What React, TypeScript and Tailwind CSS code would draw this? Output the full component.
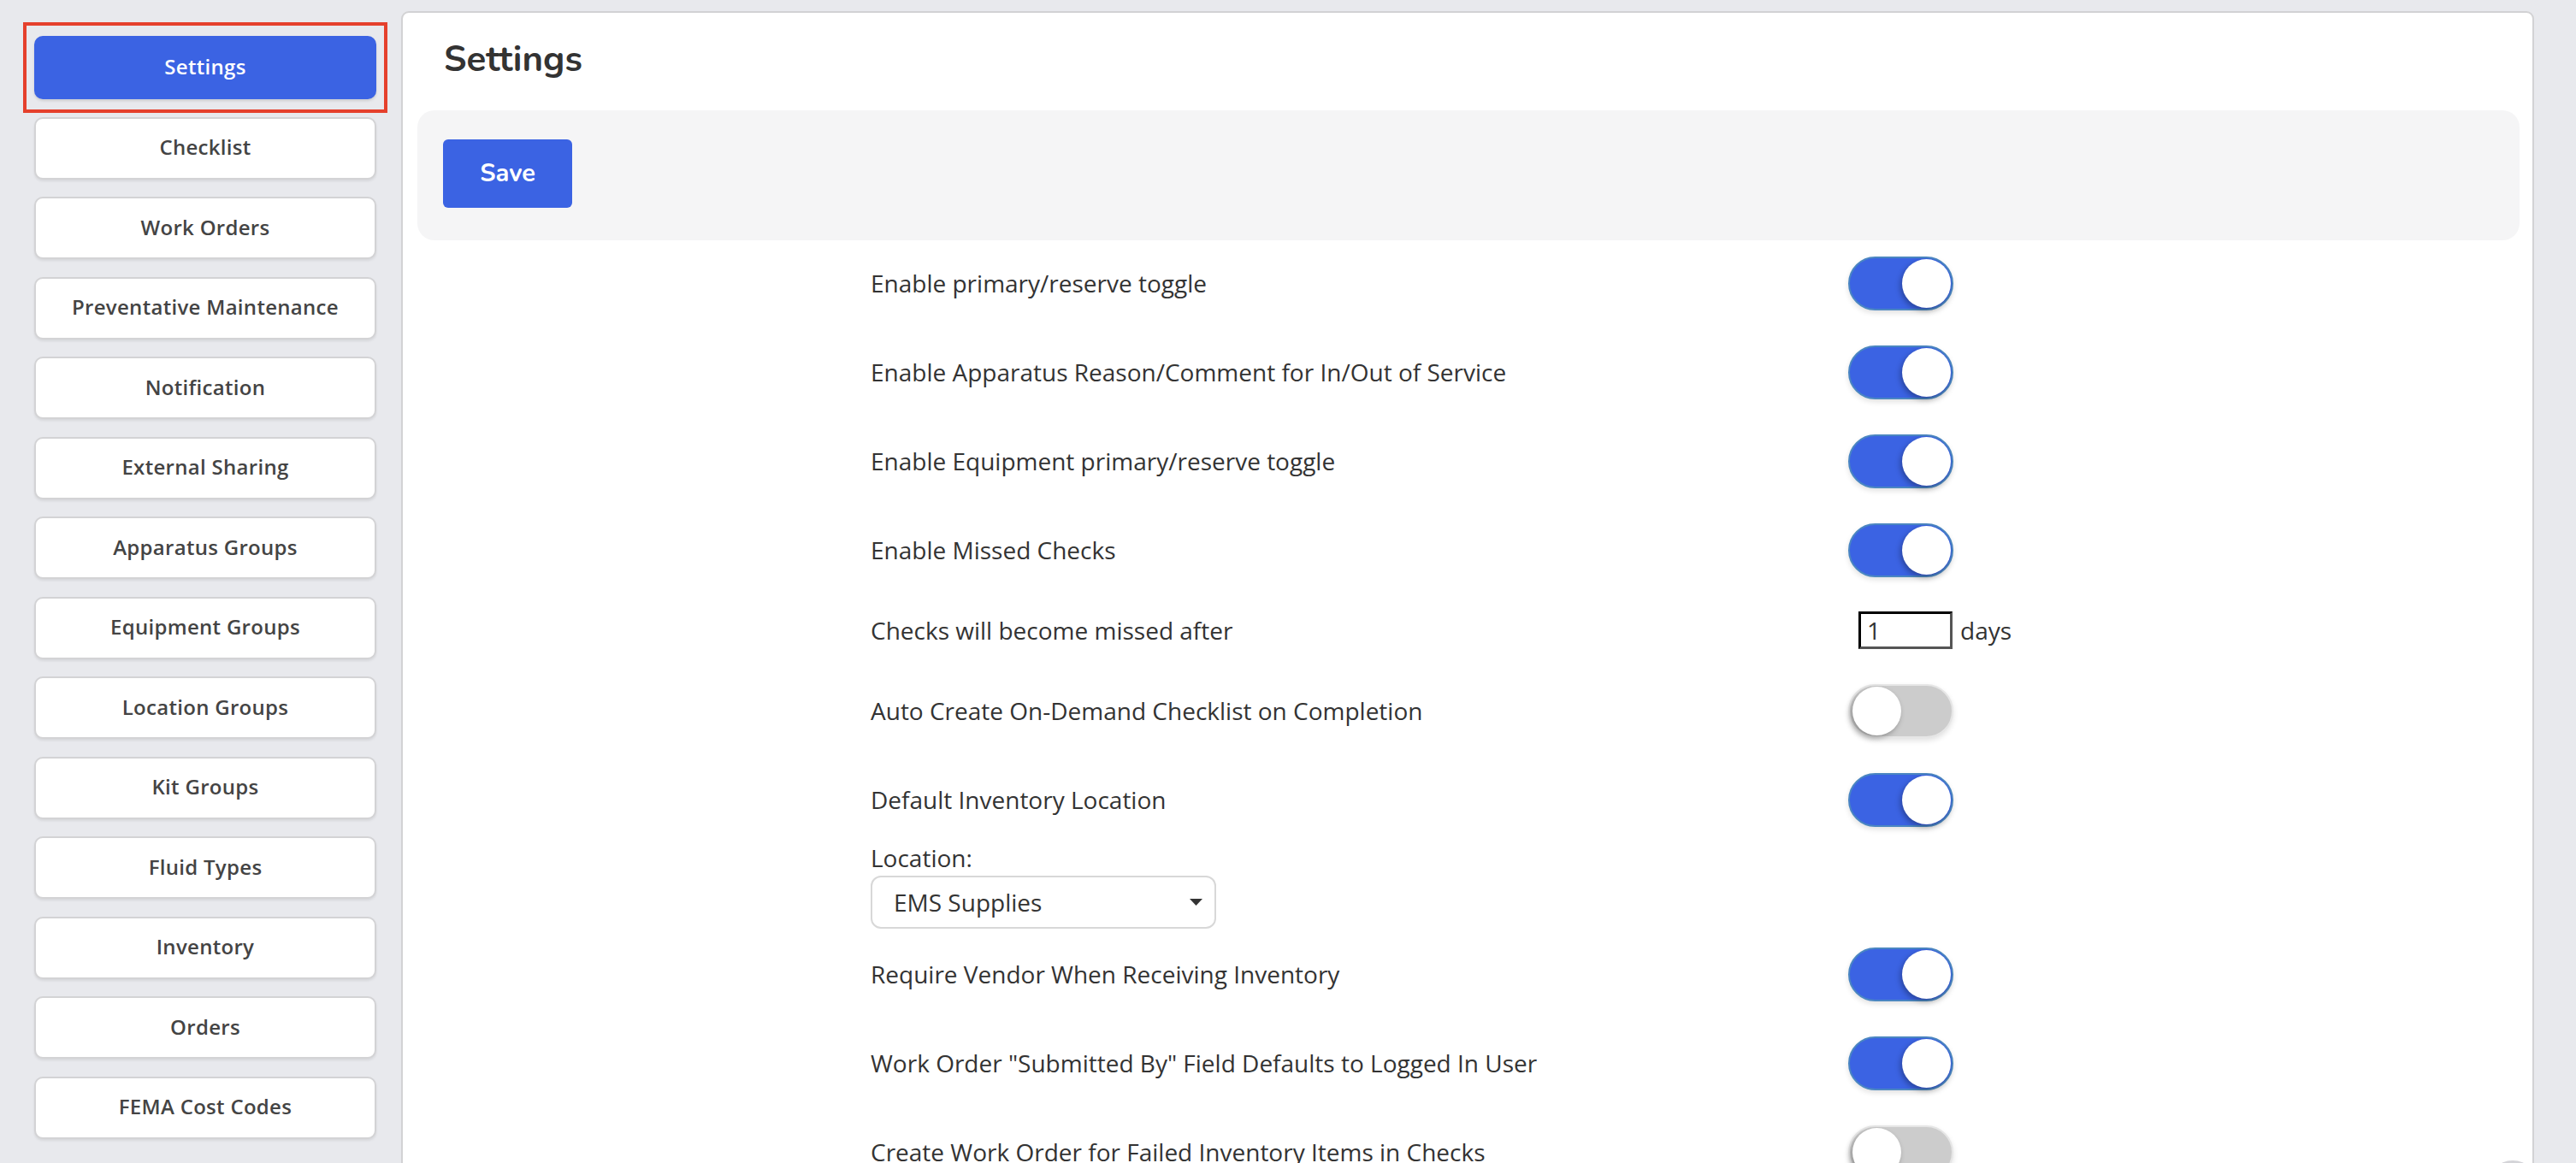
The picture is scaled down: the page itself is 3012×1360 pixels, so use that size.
import React from 'react';

const NAV = [
  'Settings',
  'Checklist',
  'Work Orders',
  'Preventative Maintenance',
  'Notification',
  'External Sharing',
  'Apparatus Groups',
  'Equipment Groups',
  'Location Groups',
  'Kit Groups',
  'Fluid Types',
  'Inventory',
  'Orders',
  'FEMA Cost Codes',
];

type Row =
  | { kind: 'toggle'; label: string; on: boolean }
  | { kind: 'days'; label: string }
  | { kind: 'location' };

const ROWS: Row[] = [
  { kind: 'toggle', label: 'Enable primary/reserve toggle', on: true },
  { kind: 'toggle', label: 'Enable Apparatus Reason/Comment for In/Out of Service', on: true },
  { kind: 'toggle', label: 'Enable Equipment primary/reserve toggle', on: true },
  { kind: 'toggle', label: 'Enable Missed Checks', on: true },
  { kind: 'days', label: 'Checks will become missed after' },
  { kind: 'toggle', label: 'Auto Create On-Demand Checklist on Completion', on: false },
  { kind: 'toggle', label: 'Default Inventory Location', on: true },
  { kind: 'location' },
  { kind: 'toggle', label: 'Require Vendor When Receiving Inventory', on: true },
  { kind: 'toggle', label: 'Work Order "Submitted By" Field Defaults to Logged In User', on: true },
  { kind: 'toggle', label: 'Create Work Order for Failed Inventory Items in Checks', on: false },
];

function Toggle({ on }: { on: boolean }) {
  return (
    <div
      className={`flex h-[63px] w-[123px] items-center rounded-full border-2 px-[1px] shadow-[0_3px_6px_rgba(0,0,0,0.12)] ${
        on ? 'justify-end border-[#4a86c2] bg-[#3b63e3]' : 'justify-start border-[#e6e6e6] bg-[#cccccc] pl-[3px]'
      }`}>
      <div className="h-[57px] w-[57px] rounded-full bg-white shadow-[-2px_3px_6px_rgba(0,0,0,0.3)]" />
    </div>
  );
}

export default function App() {
  return (
    <div
      className="flex h-[1360px] w-[3012px] overflow-hidden bg-[#e8e9ed] text-[#333]"
      style={{ fontFamily: '"Open Sans", "Noto Sans", sans-serif' }}>
      {/* Left nav */}
      <div className="w-[469px] shrink-0 pl-[40px] pt-[42px]">
        <div className="flex w-[400px] flex-col gap-[20.5px]">
          {NAV.map((name, i) =>
            i === 0 ? (
              <div key={name} className="relative">
                <div className="flex h-[74px] items-center justify-center rounded-[10px] bg-[#3b63e3] pb-[2px] text-[24px] font-semibold tracking-[0.3px] text-white shadow-[0_2px_3px_rgba(0,0,0,0.12)]">
                  {name}
                </div>
                <div className="absolute -top-[16px] -right-[13px] -bottom-[16px] -left-[13px] border-[4px] border-[#e5402c]" />
              </div>
            ) : (
              <div
                key={name}
                className="flex h-[73px] items-center justify-center rounded-[10px] border-2 border-[#d3d3d5] bg-white pb-[2px] text-[24px] font-semibold tracking-[0.3px] text-[#444] shadow-[0_2px_3px_rgba(0,0,0,0.08)]">
                {name}
              </div>
            )
          )}
        </div>
      </div>

      {/* Main card */}
      <div className="flex-1 pr-[49px] pt-[13px]">
        <div className="h-[1420px] rounded-[9px] border-2 border-[#d2d2d4] bg-white">
          <div className="h-[114px] pl-[48px] pt-[30px]">
            <h1
              className="text-[42px] font-bold leading-[50px] text-[#333]"
              style={{ fontFamily: '"Nunito", "Lato", sans-serif' }}>
              Settings
            </h1>
          </div>

          <div className="ml-[17px] mr-[15px] h-[152px] rounded-[20px] bg-[#f5f5f6] pl-[30px] pt-[34px]">
            <button
              type="button"
              className="flex h-[80px] w-[151px] items-center justify-center rounded-[6px] bg-[#3b63e3] text-[29px] font-bold text-white"
              style={{ fontFamily: '"Nunito", "Lato", sans-serif' }}>
              Save
            </button>
          </div>

          <div className="-mt-[2px] ml-[547px] text-[28px]">
            {ROWS.map((row, i) => {
              if (row.kind === 'location') {
                return (
                  <div key={i} className="pb-[1px]">
                    <div className="leading-[32px]">Location:</div>
                    <div className="mt-[5px] flex h-[62px] w-[404px] items-center justify-between rounded-[12px] border-2 border-[#d8d8d8] pl-[25px] pr-[14px]">
                      <span>EMS Supplies</span>
                      <svg width="15" height="8" viewBox="0 0 15 8">
                        <path d="M0 0h15L7.5 8z" fill="#333" />
                      </svg>
                    </div>
                  </div>
                );
              }
              if (row.kind === 'days') {
                return (
                  <div key={i} className="flex h-[84px] items-center">
                    <div className="w-[1143px]">{row.label}</div>
                    <div className="ml-[12px] flex h-[44px] w-[110px] items-center border-[3px] border-t-black border-r-[#555] border-b-[#555] border-l-black pl-[7px]">
                      1
                    </div>
                    <span className="ml-[9px]">days</span>
                  </div>
                );
              }
              return (
                <div key={i} className="flex h-[104px] items-center">
                  <div className="w-[1143px]">{row.label}</div>
                  <Toggle on={row.on} />
                </div>
              );
            })}
          </div>
        </div>
      </div>

      {/* Floating help button peeking at the bottom edge */}
      <div className="absolute left-[2908px] top-[1357px] h-[60px] w-[60px] rounded-full bg-[#d4d4d8]" />
    </div>
  );
}
